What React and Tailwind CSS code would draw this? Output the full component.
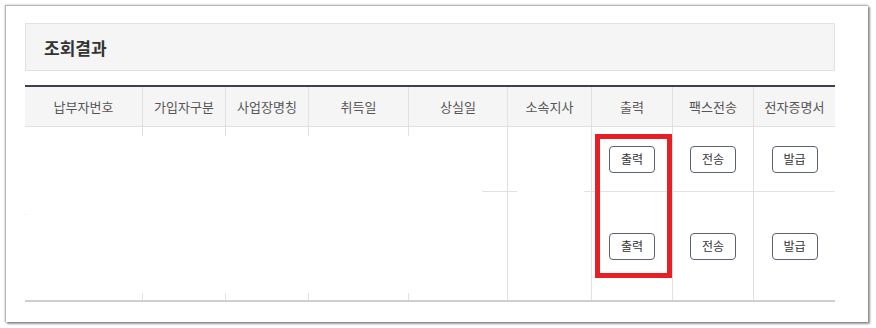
import React from 'react';

const font = { fontFamily: '"Noto Sans CJK KR", "Noto Sans", sans-serif' };

const headers = ['납부자번호', '가입자구분', '사업장명칭', '취득일', '상실일', '소속지사', '출력', '팩스전송', '전자증명서'];

const SmallButton = ({ label }) => (
    <button className="w-[46px] h-[27px] border border-[#5f6370] rounded-[4px] bg-white text-[12px] text-[#333] leading-none flex items-center justify-center">
        {label}
    </button>
);

// merged cell with only short divider stubs at top/bottom (as rendered in the capture)
const StubCell = ({ dot }) => (
    <div className="row-span-2 flex flex-col justify-between">
        <div className="h-[9px] border-r border-[#e1e1e1]" />
        {dot && <div className="w-px h-px bg-[#e1e1e1]" />}
        <div className="h-[7px] border-r border-[#e1e1e1]" />
    </div>
);

const App = () => {
    return (
        <div className="w-[876px] h-[328px] bg-white pt-[5px] pl-[5px]" style={font}>
            <div className="w-[863px] h-[317px] bg-white border-l border-t border-[#b9b9b9] shadow-[0_0_2px_rgba(0,0,0,0.35),2px_2px_2px_rgba(0,0,0,0.4)] pl-[19px] pt-[17px]">
                {/* 조회결과 title bar */}
                <div className="w-[810px] h-[48px] bg-[#f5f5f5] border border-[#e1e1e1] flex items-center pl-[18px]">
                    <span className="text-[17px] font-bold text-[#333] leading-none">조회결과</span>
                </div>

                <div className="relative w-[810px] mt-[14px]">
                    {/* header */}
                    <div className="grid grid-cols-[118px_83px_83px_100px_99px_84px_81px_81px_81px] border-t-2 border-[#3f3f4f] bg-[#f5f5f5] border-b border-b-[#e1e1e1]">
                        {headers.map((h, i) => (
                            <div
                                key={h}
                                className={`h-[39px] flex items-center justify-center text-[13px] text-[#555] ${i < headers.length - 1 ? 'border-r border-[#e1e1e1]' : ''}`}
                            >
                                {h}
                            </div>
                        ))}
                    </div>

                    {/* body */}
                    <div className="grid grid-cols-[118px_83px_83px_100px_99px_84px_81px_81px_81px] grid-rows-[65px_108px] border-b-2 border-[#cfcfcf]">
                        <StubCell dot />
                        <StubCell />
                        <StubCell />
                        <StubCell />
                        <div className="row-span-2 border-r border-[#e1e1e1] flex flex-col">
                            <div className="h-[64px]" />
                            <div className="flex justify-end">
                                <div className="w-[25px] h-px bg-[#e1e1e1]" />
                            </div>
                        </div>
                        <div className="row-span-2 border-r border-[#e1e1e1] flex flex-col">
                            <div className="h-[64px]" />
                            <div className="flex justify-between">
                                <div className="w-[9px] h-px bg-[#e1e1e1]" />
                                <div className="w-[7px] h-px bg-[#e1e1e1]" />
                            </div>
                        </div>

                        <div className="border-r border-b border-[#e1e1e1] flex items-center justify-center">
                            <SmallButton label="출력" />
                        </div>
                        <div className="border-r border-b border-[#e1e1e1] flex items-center justify-center">
                            <SmallButton label="전송" />
                        </div>
                        <div className="border-b border-[#e1e1e1] flex items-center justify-center">
                            <SmallButton label="발급" />
                        </div>

                        <div className="border-r border-[#e1e1e1] flex items-center justify-center">
                            <SmallButton label="출력" />
                        </div>
                        <div className="border-r border-[#e1e1e1] flex items-center justify-center">
                            <SmallButton label="전송" />
                        </div>
                        <div className="flex items-center justify-center">
                            <SmallButton label="발급" />
                        </div>
                    </div>

                    {/* red highlight annotation */}
                    <div className="absolute left-[570px] top-[49px] w-[77px] h-[144px] border-[5px] border-[#e81e25] pointer-events-none" />
                </div>
            </div>
        </div>
    );
};

export default App;
